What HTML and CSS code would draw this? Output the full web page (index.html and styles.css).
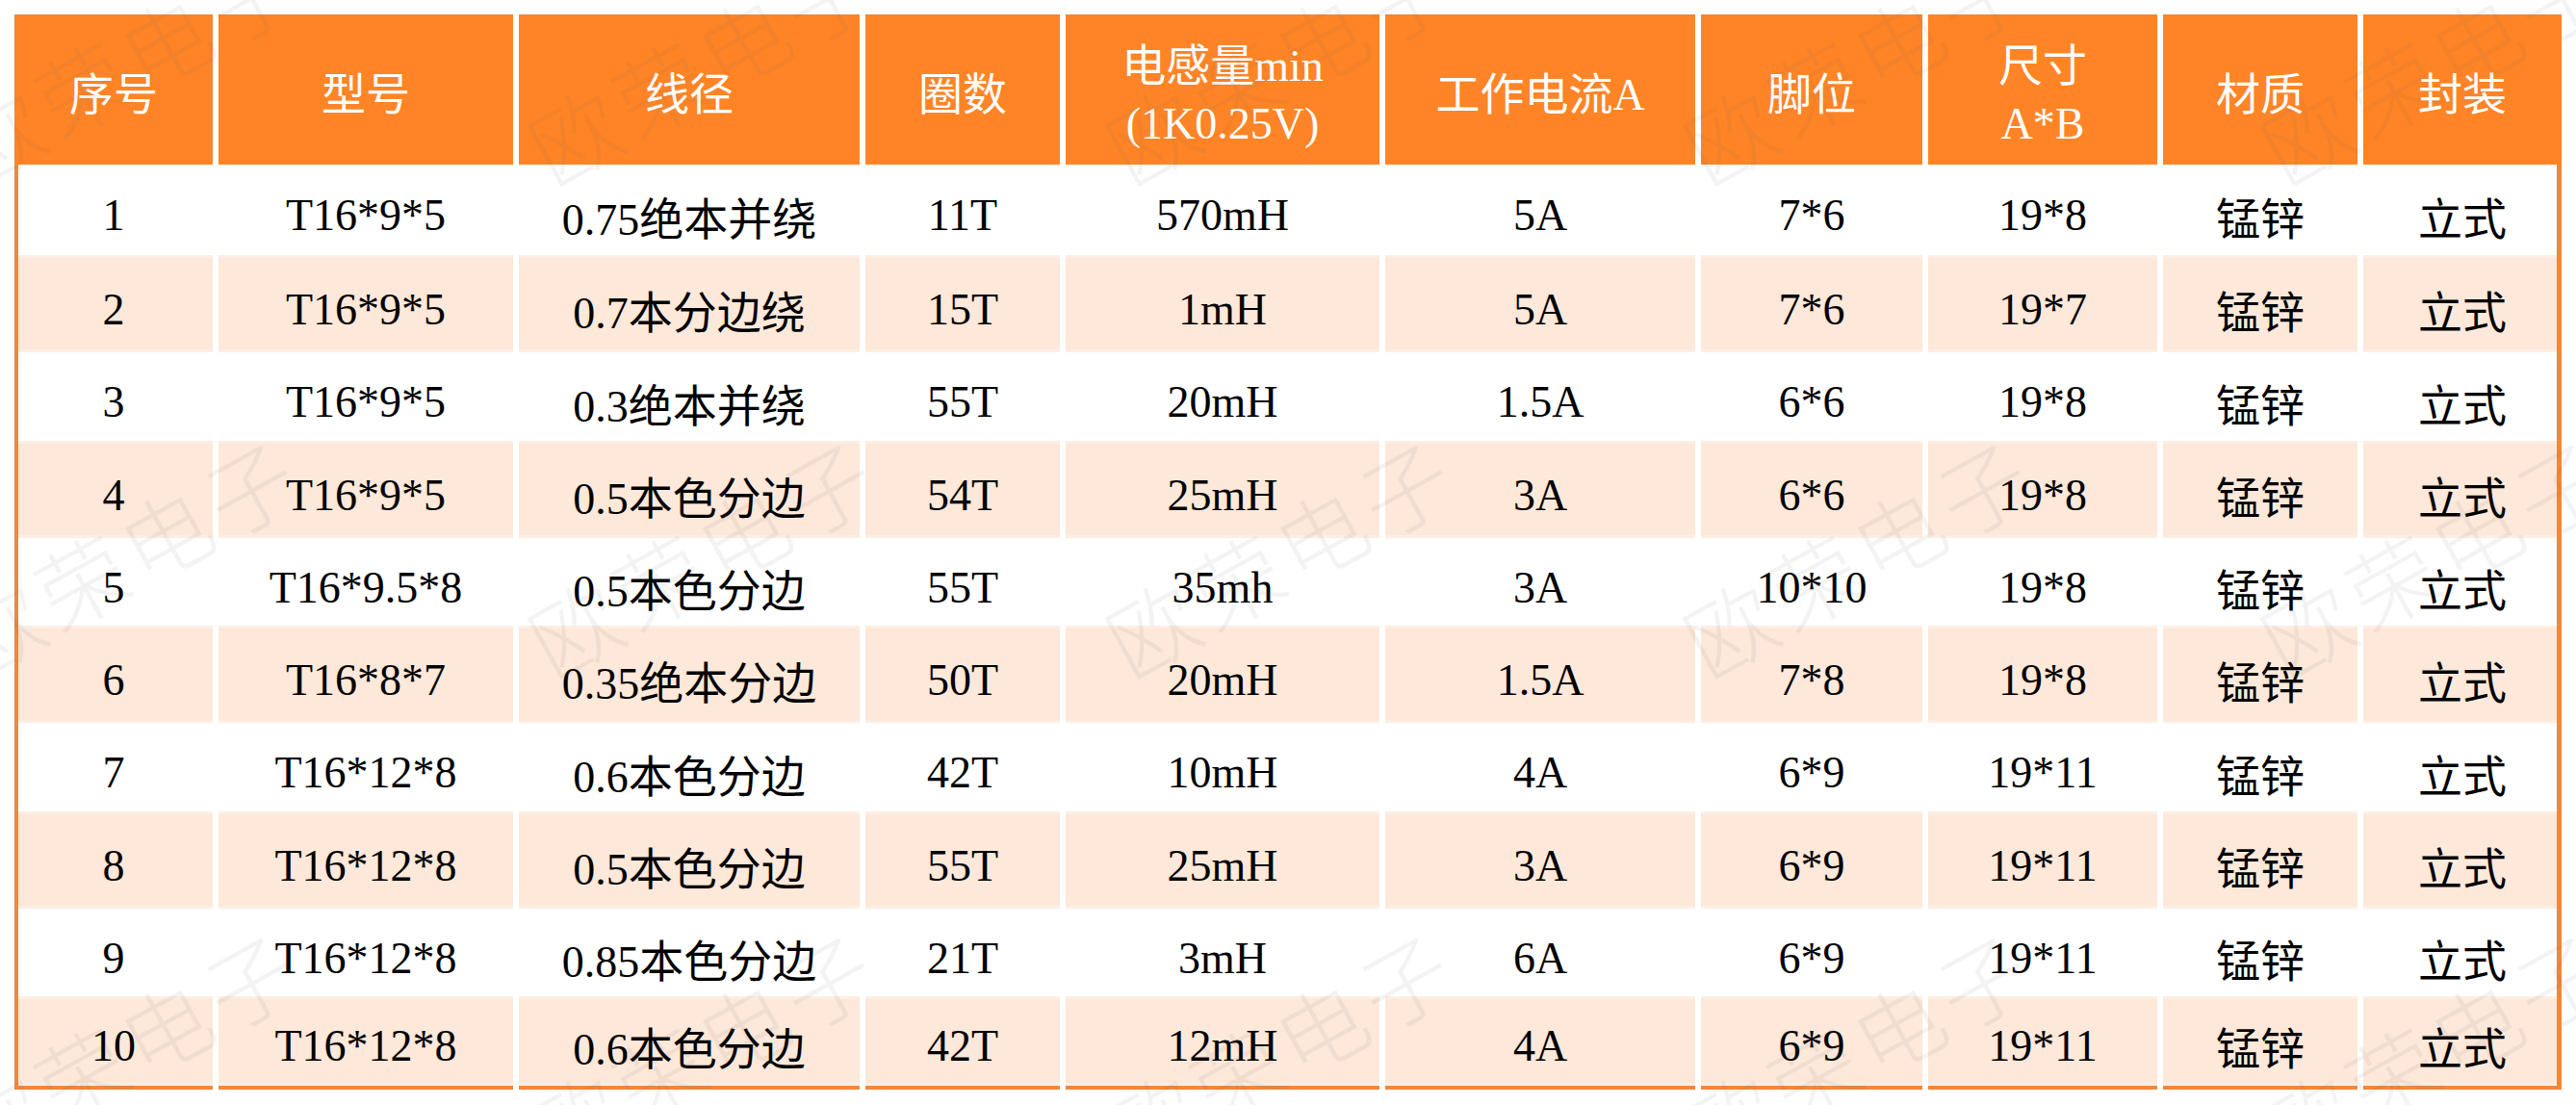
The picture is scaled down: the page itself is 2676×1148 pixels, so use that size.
FILE: index.html
```html
<!DOCTYPE html>
<html lang="zh-CN">
<head>
<meta charset="utf-8">
<title>磁环电感规格表</title>
<link rel="stylesheet" href="styles.css">
</head>
<body>
<div class="sheet">
  <div class="spec-table" role="table">
    <div class="row head" role="row">
      <div class="th" role="columnheader">序号</div>
      <div class="th" role="columnheader">型号</div>
      <div class="th" role="columnheader">线径</div>
      <div class="th" role="columnheader">圈数</div>
      <div class="th" role="columnheader"><span>电感量min</span><span>(1K0.25V)</span></div>
      <div class="th" role="columnheader">工作电流A</div>
      <div class="th" role="columnheader">脚位</div>
      <div class="th" role="columnheader"><span>尺寸</span><span>A*B</span></div>
      <div class="th" role="columnheader">材质</div>
      <div class="th" role="columnheader">封装</div>
    </div>
    <div class="row" role="row">
      <div class="td first">1</div><div class="td">T16*9*5</div><div class="td">0.75绝本并绕</div><div class="td">11T</div><div class="td">570mH</div><div class="td">5A</div><div class="td">7*6</div><div class="td">19*8</div><div class="td">锰锌</div><div class="td last">立式</div>
    </div>
    <div class="row alt" role="row">
      <div class="td first">2</div><div class="td">T16*9*5</div><div class="td">0.7本分边绕</div><div class="td">15T</div><div class="td">1mH</div><div class="td">5A</div><div class="td">7*6</div><div class="td">19*7</div><div class="td">锰锌</div><div class="td last">立式</div>
    </div>
    <div class="row" role="row">
      <div class="td first">3</div><div class="td">T16*9*5</div><div class="td">0.3绝本并绕</div><div class="td">55T</div><div class="td">20mH</div><div class="td">1.5A</div><div class="td">6*6</div><div class="td">19*8</div><div class="td">锰锌</div><div class="td last">立式</div>
    </div>
    <div class="row alt" role="row">
      <div class="td first">4</div><div class="td">T16*9*5</div><div class="td">0.5本色分边</div><div class="td">54T</div><div class="td">25mH</div><div class="td">3A</div><div class="td">6*6</div><div class="td">19*8</div><div class="td">锰锌</div><div class="td last">立式</div>
    </div>
    <div class="row" role="row">
      <div class="td first">5</div><div class="td">T16*9.5*8</div><div class="td">0.5本色分边</div><div class="td">55T</div><div class="td">35mh</div><div class="td">3A</div><div class="td">10*10</div><div class="td">19*8</div><div class="td">锰锌</div><div class="td last">立式</div>
    </div>
    <div class="row alt" role="row">
      <div class="td first">6</div><div class="td">T16*8*7</div><div class="td">0.35绝本分边</div><div class="td">50T</div><div class="td">20mH</div><div class="td">1.5A</div><div class="td">7*8</div><div class="td">19*8</div><div class="td">锰锌</div><div class="td last">立式</div>
    </div>
    <div class="row" role="row">
      <div class="td first">7</div><div class="td">T16*12*8</div><div class="td">0.6本色分边</div><div class="td">42T</div><div class="td">10mH</div><div class="td">4A</div><div class="td">6*9</div><div class="td">19*11</div><div class="td">锰锌</div><div class="td last">立式</div>
    </div>
    <div class="row alt" role="row">
      <div class="td first">8</div><div class="td">T16*12*8</div><div class="td">0.5本色分边</div><div class="td">55T</div><div class="td">25mH</div><div class="td">3A</div><div class="td">6*9</div><div class="td">19*11</div><div class="td">锰锌</div><div class="td last">立式</div>
    </div>
    <div class="row" role="row">
      <div class="td first">9</div><div class="td">T16*12*8</div><div class="td">0.85本色分边</div><div class="td">21T</div><div class="td">3mH</div><div class="td">6A</div><div class="td">6*9</div><div class="td">19*11</div><div class="td">锰锌</div><div class="td last">立式</div>
    </div>
    <div class="row alt end" role="row">
      <div class="td first">10</div><div class="td">T16*12*8</div><div class="td">0.6本色分边</div><div class="td">42T</div><div class="td">12mH</div><div class="td">4A</div><div class="td">6*9</div><div class="td">19*11</div><div class="td">锰锌</div><div class="td last">立式</div>
    </div>
  </div>

  <div class="watermark" aria-hidden="true">
    <div class="wm"><span>欧荣电子</span></div>
    <div class="wm"><span>欧荣电子</span></div>
    <div class="wm"><span>欧荣电子</span></div>
    <div class="wm"><span>欧荣电子</span></div>
    <div class="wm"><span>欧荣电子</span></div>
    <div class="wm"><span>欧荣电子</span></div>
    <div class="wm"><span>欧荣电子</span></div>
    <div class="wm"><span>欧荣电子</span></div>
    <div class="wm"><span>欧荣电子</span></div>
    <div class="wm"><span>欧荣电子</span></div>
    <div class="wm"><span>欧荣电子</span></div>
    <div class="wm"><span>欧荣电子</span></div>
    <div class="wm"><span>欧荣电子</span></div>
    <div class="wm"><span>欧荣电子</span></div>
    <div class="wm"><span>欧荣电子</span></div>
  </div>
</div>
</body>
</html>
```

FILE: styles.css
```css
html, body {
  margin: 0;
  padding: 0;
  background: #ffffff;
}

.sheet {
  position: relative;
  width: 2676px;
  height: 1148px;
  overflow: hidden;
  padding: 15px 0 0 15px;
  box-sizing: border-box;
  font-family: "Liberation Serif", "Noto Sans CJK SC", serif;
  font-size: 46px;
  color: #000;
}

.spec-table {
  display: grid;
  grid-template-columns: 206px 306px 354px 202px 326px 322px 230px 238px 202px 206px;
  grid-template-rows: 156px 94px 101px 92px 101px 91px 101px 92px 101px 91px 97px;
  column-gap: 6px;
  width: 2646px;
}

.row {
  display: contents;
}

.th {
  background: #fe8426;
  color: #ffffff;
  display: flex;
  flex-direction: column;
  align-items: center;
  justify-content: center;
  padding-top: 12px;
  box-sizing: border-box;
  line-height: 60px;
  white-space: nowrap;
}

.td {
  display: flex;
  align-items: center;
  justify-content: center;
  padding-top: 11px;
  box-sizing: border-box;
  background: #ffffff;
  white-space: nowrap;
}

.row.alt .td {
  background: #fde8d9;
  box-shadow: inset 0 3px 0 #fdeee3, inset 0 -3px 0 #fdeee3;
}

.td.first {
  border-left: 4px solid #ee893b;
  padding-right: 4px;
}

.td.last {
  border-right: 5px solid #ee893b;
  padding-left: 5px;
}

.row.end .td {
  border-bottom: 4px solid #ee893b;
  padding-top: 9px;
}

.watermark {
  position: absolute;
  left: -170px;
  top: -194px;
  display: grid;
  grid-template-columns: repeat(5, 600px);
  grid-auto-rows: 512px;
  pointer-events: none;
}

.wm {
  display: flex;
  align-items: center;
  justify-content: center;
}

.wm span {
  display: block;
  transform: rotate(-29deg);
  font-family: "Noto Sans CJK SC", sans-serif;
  font-weight: 300;
  font-size: 92px;
  letter-spacing: 8px;
  color: rgba(90, 90, 90, 0.075);
  white-space: nowrap;
}
```
